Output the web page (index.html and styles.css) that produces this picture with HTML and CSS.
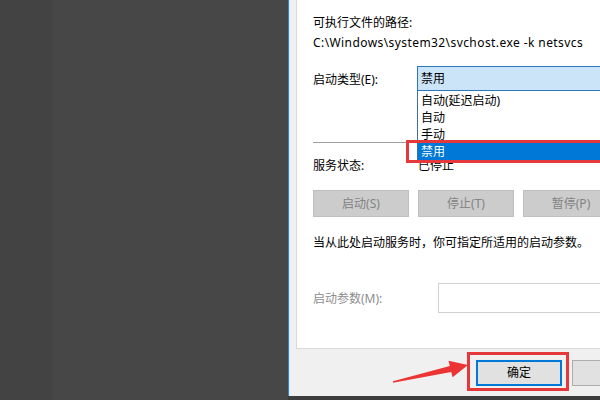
FILE: index.html
```html
<!DOCTYPE html>
<html lang="zh-CN">
<head>
<meta charset="utf-8">
<title>服务属性</title>
<link rel="stylesheet" href="styles.css">
</head>
<body>
<div class="screen">
  <div class="shade"></div>
  <div class="gap"></div>
  <div class="dialog">
    <div class="panel">
      <div class="line label1">可执行文件的路径:</div>
      <div class="line path">C:\Windows\system32\svchost.exe -k netsvcs</div>
      <div class="type-row">
        <span class="lbl lbl-type">启动类型(E):</span>
        <div class="combo">
          <div class="combo-box">禁用</div>
          <ul class="list">
            <li>自动(延迟启动)</li>
            <li>自动</li>
            <li>手动</li>
            <li class="sel">禁用</li>
          </ul>
        </div>
      </div>
      <div class="sep"></div>
      <div class="line status-row"><span class="lbl lbl-status">服务状态:</span><span>已停止</span></div>
      <div class="btns">
        <div class="btn">启动(S)</div>
        <div class="btn">停止(T)</div>
        <div class="btn">暂停(P)</div>
      </div>
      <div class="line note">当从此处启动服务时，你可指定所适用的启动参数。</div>
      <div class="param-row">
        <span class="lbl lbl-param">启动参数(M):</span>
        <div class="input"></div>
      </div>
    </div>
    <div class="footer">
      <div class="fbtn ok">确定</div>
      <div class="fbtn cancel">取消</div>
    </div>
  </div>
</div>
<div class="mark mark-list"></div>
<div class="mark mark-ok"></div>
<svg class="arrow" width="600" height="400" viewBox="0 0 600 400">
  <polygon points="393,381.3 449.8,366.1 448.5,360.8 468,365 452.6,377.2 451.2,371.9 393,382.7" fill="#ec3434"/>
</svg>
</body>
</html>
```

FILE: styles.css
```css
html, body {
  margin: 0;
  padding: 0;
  width: 600px;
  height: 400px;
  overflow: hidden;
}
body {
  position: relative;
  background: #3f3f3f;
}
.screen {
  display: flex;
  align-items: flex-start;
  width: 600px;
  height: 400px;
  overflow: hidden;
  background: #3d3d3d;
  font-family: "Noto Sans", "Noto Sans CJK SC", sans-serif;
  font-size: 12px;
  color: #000;
}
.shade {
  flex: none;
  width: 53px;
  height: 400px;
  background: #434343;
}
.gap {
  flex: none;
  width: 235px;
  height: 400px;
  background: #474747;
}
.dialog {
  flex: none;
  width: 420px;
  height: 396px;
  background: #f0f0f0;
  border-left: 1px solid #2f86d8;
  box-shadow: inset 1px 0 0 #dcebf9;
  padding-left: 7px;
  box-sizing: border-box;
}
.panel {
  height: 334px;
  background: #fff;
  border-left: 1px solid #d9d9d9;
  border-bottom: 1px solid #d9d9d9;
  padding: 14px 0 0 16px;
  box-sizing: content-box;
}
.line {
  line-height: 18px;
  height: 18px;
  white-space: nowrap;
}
.path {
  margin-top: 2px;
  letter-spacing: 0.42px;
}
.type-row {
  margin-top: 14px;
  display: flex;
  align-items: center;
  height: 25px;
}
.lbl {
  flex: none;
  display: inline-block;
}
.lbl-type { width: 104px; }
.lbl-status { width: 105px; }
.lbl-param { width: 125px; color: #8d8d8d; }
.combo {
  position: relative;
  flex: 1;
  height: 25px;
}
.combo-box {
  height: 25px;
  box-sizing: border-box;
  border: 1px solid #2a77c0;
  background: #cce4f7;
  padding-left: 3px;
  line-height: 23px;
}
.list {
  position: absolute;
  top: 25px;
  left: 0;
  right: 0;
  margin: 0;
  padding: 1px 0 0 0;
  list-style: none;
  background: #fff;
  border: 1px solid #3d6fa3;
  border-top: none;
  z-index: 2;
}
.list li {
  height: 17px;
  line-height: 17px;
  padding-left: 3px;
}
.list li.sel {
  background: #0078d7;
  color: #fff;
}
.sep {
  margin-top: 51px;
  height: 1px;
  background: #a0a0a0;
}
.status-row {
  margin-top: 14px;
}
.btns {
  margin-top: 15px;
  display: flex;
  gap: 9px;
}
.btn {
  flex: none;
  width: 96px;
  height: 27px;
  box-sizing: border-box;
  border: 1px solid #bfbfbf;
  background: #cccccc;
  color: #838383;
  text-align: center;
  line-height: 25px;
}
.note {
  margin-top: 17px;
}
.param-row {
  margin-top: 31px;
  display: flex;
  align-items: center;
  height: 30px;
}
.input {
  flex: 1;
  height: 30px;
  box-sizing: border-box;
  border: 1px solid #d0d0d0;
  background: #fff;
}
.footer {
  display: flex;
  gap: 10px;
  padding: 11px 0 0 180px;
}
.fbtn {
  flex: none;
  width: 86px;
  height: 26px;
  box-sizing: border-box;
  background: #e1e1e1;
  text-align: center;
  line-height: 22px;
}
.ok {
  border: 2px solid #0078d7;
}
.cancel {
  border: 1px solid #adadad;
  line-height: 24px;
}
.mark {
  position: absolute;
  box-sizing: border-box;
  border: 3px solid #e5383b;
  z-index: 5;
}
.mark-list {
  left: 406px;
  top: 140px;
  width: 200px;
  height: 23px;
}
.mark-ok {
  left: 467px;
  top: 352px;
  width: 102px;
  height: 39px;
}
.arrow {
  position: absolute;
  left: 0;
  top: 0;
  z-index: 6;
}
```
